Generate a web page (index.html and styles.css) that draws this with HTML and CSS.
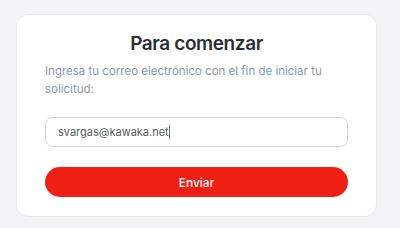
FILE: index.html
```html
<!DOCTYPE html>
<html lang="es">
<head>
<meta charset="utf-8">
<link rel="stylesheet" href="styles.css">
</head>
<body>
<div class="page">
  <div class="card">
    <h1 class="title">Para comenzar</h1>
    <p class="lead">Ingresa tu correo electrónico con el fin de iniciar tu solicitud:</p>
    <div class="field"><span class="value">svargas@kawaka.net</span><span class="caret"></span></div>
    <button class="btn">Enviar</button>
  </div>
</div>
</body>
</html>
```
FILE: styles.css
```css
html, body { margin: 0; padding: 0; }
body {
  background: #f2f3f5;
  font-family: Inter, "Noto Sans", sans-serif;
  width: 400px;
  height: 228px;
  overflow: hidden;
}
.page {
  padding: 14px 0 0 16px;
}
.card {
  box-sizing: border-box;
  width: 361px;
  height: 203px;
  background: #ffffff;
  border: 1px solid #e6e8eb;
  border-radius: 12px;
  padding: 17px 28px 0 28px;
  display: flex;
  flex-direction: column;
}
.title {
  margin: 0;
  font-size: 19px;
  line-height: 24px;
  font-weight: 600;
  letter-spacing: -0.4px;
  color: #2a2e33;
  text-align: center;
}
.lead {
  margin: 6px 0 0 0;
  font-size: 11.5px;
  line-height: 18px;
  color: #8c97a3;
}
.field {
  box-sizing: border-box;
  margin-top: 19px;
  height: 30px;
  border: 1px solid #cfd4da;
  border-radius: 8px;
  padding: 0 12px;
  display: flex;
  align-items: center;
  font-size: 11px;
  color: #575d63;
}
.caret {
  display: inline-block;
  width: 1px;
  height: 14px;
  background: #6b7177;
  margin-left: 0;
}
.btn {
  margin-top: 20px;
  height: 30px;
  border: none;
  border-radius: 15px;
  background: #f01f14;
  color: #ffffff;
  font-family: Inter, "Noto Sans", sans-serif;
  font-size: 12px;
  font-weight: 500;
  padding: 0;
}
```
